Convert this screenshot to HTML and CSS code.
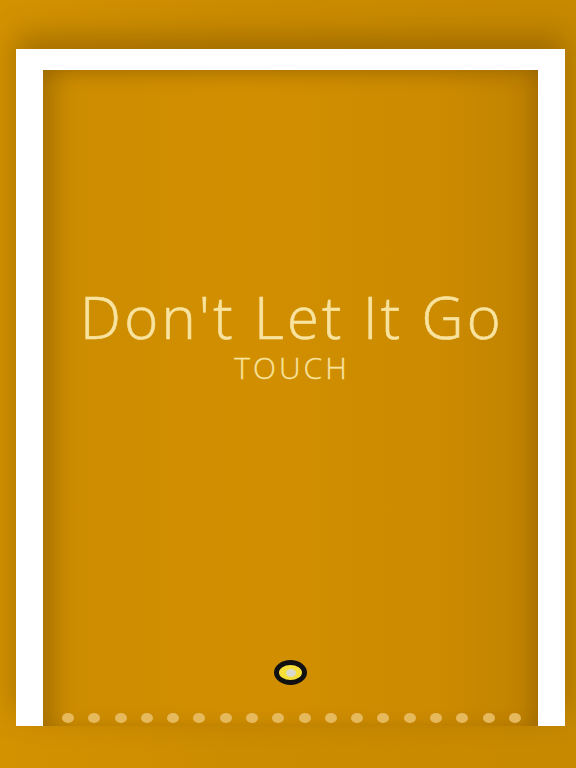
FILE: index.html
```html
<!DOCTYPE html>
<html>
<head>
<meta charset="utf-8">
<link rel="stylesheet" href="styles.css">
</head>
<body>
<div class="stage">
  <div class="frame">
    <div class="inner">
      <div class="titles">
        <h1 class="title">Don't Let It Go</h1>
        <div class="sub">TOUCH</div>
      </div>
      <div class="ball"><span class="ball-core"></span></div>
      <div class="dots">
        <span></span><span></span><span></span><span></span><span></span><span></span>
        <span></span><span></span><span></span><span></span><span></span><span></span>
        <span></span><span></span><span></span><span></span><span></span><span></span>
      </div>
    </div>
  </div>
</div>
</body>
</html>
```
FILE: styles.css
```css
html, body {
  margin: 0;
  padding: 0;
}
body {
  width: 576px;
  height: 768px;
  overflow: hidden;
  font-family: "Open Sans", "Lato", sans-serif;
}
.stage {
  box-sizing: border-box;
  width: 576px;
  height: 768px;
  padding: 49px 11px 0 16px;
  background: linear-gradient(90deg, #d39200 0%, #cc8c00 40%, #c78900 100%);
}
.frame {
  box-sizing: border-box;
  height: 677px;
  border-style: solid;
  border-color: #ffffff;
  border-width: 21px 27px 0 27px;
  box-shadow: 0 -14px 28px rgba(110, 70, 0, 0.45);
  background: linear-gradient(90deg, #c68a00 0%, #cd8d00 6%, #d18f00 40%, #cc8b00 80%, #bf8100 100%);
}
.inner {
  height: 100%;
  display: flex;
  flex-direction: column;
  align-items: center;
  box-shadow: inset 20px 0 22px -8px rgba(130, 85, 0, 0.4), inset -14px 0 18px -6px rgba(130, 85, 0, 0.35), inset 0 12px 18px -8px rgba(130, 85, 0, 0.3);
}
.titles {
  margin-top: 216px;
  display: flex;
  flex-direction: column;
  align-items: center;
  color: #f8e39f;
}
.title {
  margin: 0;
  font-weight: 300;
  font-size: 58px;
  line-height: 62px;
  letter-spacing: 3.2px;
  padding-left: 3px;
  -webkit-text-stroke: 0.6px #f8e39f;
}
.sub {
  font-weight: 300;
  font-size: 30px;
  line-height: 32px;
  letter-spacing: 3px;
  padding-left: 3px;
  margin-top: 4px;
  -webkit-text-stroke: 0.3px #f8e39f;
}
.ball {
  margin-top: auto;
  box-sizing: border-box;
  width: 33px;
  height: 25px;
  border-radius: 50%;
  border: 5px solid #111;
  background: #f7df3a;
  display: flex;
  align-items: center;
  justify-content: center;
}
.ball-core {
  width: 10px;
  height: 8px;
  border-radius: 50%;
  background: #d9d8cf;
}
.dots {
  align-self: stretch;
  display: flex;
  justify-content: space-between;
  padding: 0 17px 0 19px;
  margin: 28px 0 3px;
}
.dots span {
  width: 12px;
  height: 10px;
  border-radius: 50%;
  background: #e6b95c;
}
```
